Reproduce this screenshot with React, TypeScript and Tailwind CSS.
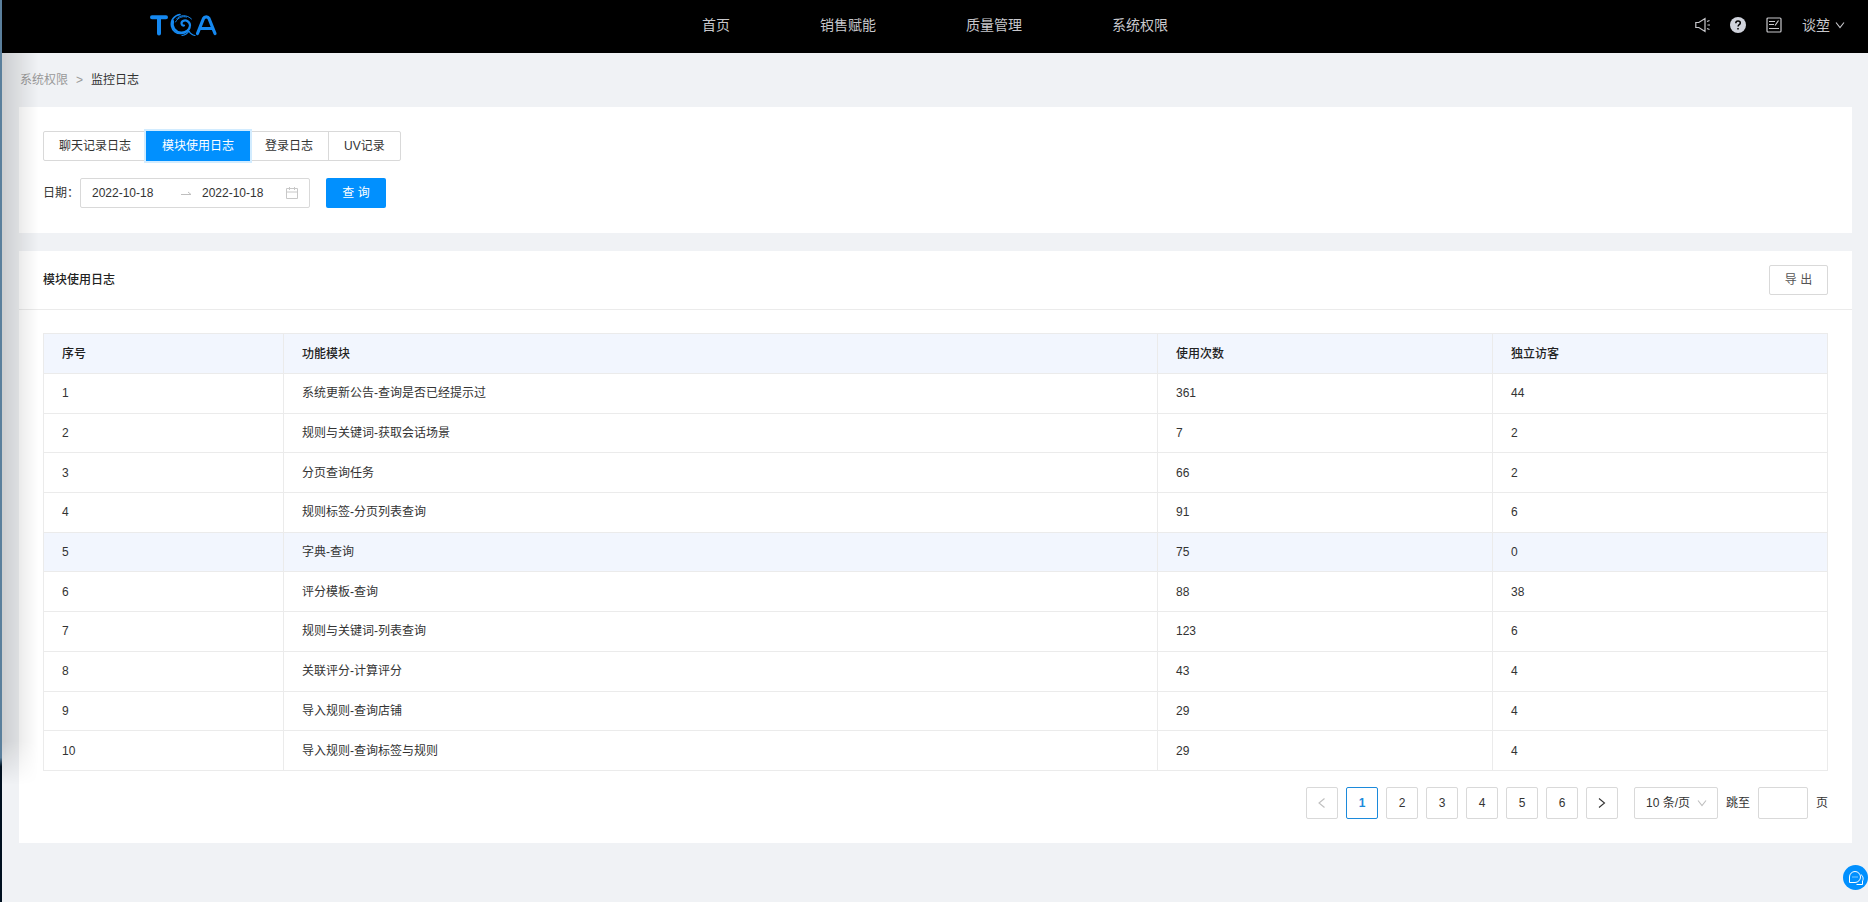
import { useState } from "react";
import clsx from "clsx";

const NAV = ["首页", "销售赋能", "质量管理", "系统权限"];

const TABS = ["聊天记录日志", "模块使用日志", "登录日志", "UV记录"];

const ROWS = [
    { name: "系统更新公告-查询是否已经提示过", count: 361, visitors: 44 },
    { name: "规则与关键词-获取会话场景", count: 7, visitors: 2 },
    { name: "分页查询任务", count: 66, visitors: 2 },
    { name: "规则标签-分页列表查询", count: 91, visitors: 6 },
    { name: "字典-查询", count: 75, visitors: 0 },
    { name: "评分模板-查询", count: 88, visitors: 38 },
    { name: "规则与关键词-列表查询", count: 123, visitors: 6 },
    { name: "关联评分-计算评分", count: 43, visitors: 4 },
    { name: "导入规则-查询店铺", count: 29, visitors: 4 },
    { name: "导入规则-查询标签与规则", count: 29, visitors: 4 },
];

function Logo() {
    return (
        <svg width="70" height="24" viewBox="0 0 70 24" fill="none" stroke="#1588f0" strokeLinecap="round" strokeLinejoin="round">
            <path d="M3 4.200h14M10 4.200v16.300" strokeWidth="4" />
            {/* Swirl */}
            <path d="M31 1.500c-6 1-9.500 6-8.500 11.500 1 5 5 8 10 7.500 4-.4 7-3 8-6" strokeWidth="1.600" />
            <path d="M24 8c-1.500 6 2 11 8 11.500 5 .3 9-3 9-7 0-4-4-6-7-4.500-2.500 1.500-1.500 5 1 4.500" strokeWidth="2.200" />
            <path d="M27.500 6C31 1.500 38 1.500 42.500 6M26.500 9c3-5 7-6 11-5" strokeWidth="1" />
            <path d="M33 22.500c3-.5 5.500-2 7-4.500 1 2 2.500 4 6 4.500" strokeWidth="1.200" />
            <path d="M48.500 20.500 54.500 5.500c1-2.200 4.500-2.200 5.500 0l6 15M52 15.500h11" strokeWidth="3.200" />
        </svg>
    );
}

function Chevron({ dir, className }: { dir: "left" | "right" | "down"; className?: string }) {
    const d = {
        left: "M8.500 1.500 3 6l5.500 4.500",
        right: "M3 1.500 8.500 6 3 10.500",
        down: "M2 3.500 6 8.500l4-5",
    }[dir];
    return (
        <svg width="12" height="12" viewBox="0 0 12 12" fill="none" stroke="currentColor" strokeWidth="1.100" className={className}>
            <path d={d} />
        </svg>
    );
}

export default function App() {
    const [tab, setTab] = useState(1);
    const [page, setPage] = useState(1);

    return (
        <div className="flex min-h-screen bg-[#f0f2f5] font-['Liberation_Sans','Noto_Sans_CJK_SC',sans-serif] text-xs text-[#333]">
            {/* Window edge */}
            <div className="w-[2px] shrink-0 bg-linear-to-b from-[#5a7f9c] from-84% to-[#001020] to-85%" />

            <div className="relative min-w-0 flex-1">
                <header className="grid h-[53px] grid-cols-[1fr_auto_1fr] items-center bg-black pb-1 text-sm text-[#c8c8cc]">
                    <div className="pl-[147px]">
                        <Logo />
                    </div>
                    <nav className="flex gap-[90px]">
                        {NAV.map((item) => (
                            <a key={item} href="#">
                                {item}
                            </a>
                        ))}
                    </nav>
                    <div className="flex items-center justify-end gap-5 pr-[22px]">
                        <button aria-label="公告">
                            <svg width="16" height="16" viewBox="0 0 16 16" fill="none" stroke="currentColor">
                                <path d="M1.800 5.500h3L11 1.500v13l-6.200-4h-3zM13 4.500l2.500-1M13.500 8H16M13 11.500l2.500 1" strokeWidth="1.200" />
                            </svg>
                        </button>
                        <button aria-label="帮助">
                            <svg width="16" height="16" viewBox="0 0 16 16">
                                <circle cx="8" cy="8" r="8" fill="#d0d3dc" />
                                <path d="M5.800 6.200c0-3 4.500-2.800 4.500-.2 0 1.800-2.200 1.600-2.200 3.500M8 11v1.500" fill="none" stroke="#000" strokeWidth="1.500" />
                            </svg>
                        </button>
                        <button aria-label="日志">
                            <svg width="16" height="16" viewBox="0 0 16 16" fill="none" stroke="currentColor">
                                <rect x="1" y="1" width="14" height="14" rx="1" strokeWidth="1.200" />
                                <path d="M3 4.500h6M3 7.500h5M3 11.500h10M9 8.500l3.500-5" strokeWidth="1.200" />
                            </svg>
                        </button>
                        <button className="flex items-center gap-1">
                            谈堃
                            <Chevron dir="down" />
                        </button>
                    </div>
                </header>

                {/* Shade cast over the left side of the page */}
                <div className="pointer-events-none absolute top-[53px] left-0 h-[732px] w-9 bg-linear-to-r from-black/15 to-transparent mask-b-from-94%" />

                <main className="pr-4 pl-[17px]">
                    <div className="flex h-[54px] items-center gap-2 pl-px text-[#999]">
                        <a href="#">系统权限</a>
                        <span>&gt;</span>
                        <span className="text-[#333]">监控日志</span>
                    </div>

                    <section className="bg-white px-6 pt-6 pb-[25px]">
                        <div className="flex">
                            {TABS.map((t, i) => (
                                <button
                                    key={t}
                                    onClick={() => setTab(i)}
                                    className={clsx(
                                        "-mr-px h-[30px] border px-[15px] first:rounded-l-xs last:rounded-r-xs",
                                        i === tab
                                            ? "relative border-[#0190fe] bg-[#0190fe] text-white shadow-[0_0_0_2px_#d2ecff]"
                                            : "border-[#d9d9d9]"
                                    )}
                                >
                                    {t}
                                </button>
                            ))}
                        </div>
                        <div className="mt-[17px] flex items-center">
                            <label htmlFor="start" className="w-[37px]">
                                日期：
                            </label>
                            <div className="flex h-[30px] w-[230px] items-center rounded-xs border border-[#d9d9d9] px-[11px]">
                                <input id="start" defaultValue="2022-10-18" className="w-[88px] outline-none" />
                                <svg width="12" height="12" viewBox="0 0 12 12" fill="none" stroke="#bfbfbf" className="mr-[10px]">
                                    <path d="M1 7.500h10L8 5" />
                                </svg>
                                <input aria-label="结束日期" defaultValue="2022-10-18" className="w-20 outline-none" />
                                <svg width="12" height="12" viewBox="0 0 12 12" fill="none" stroke="#c8c8c8" className="ml-1">
                                    <path d="M.5 1.500h11v10H.5zM.5 5h11M3.500 0v3M8.500 0v3" />
                                </svg>
                            </div>
                            <button className="ml-4 h-[30px] w-[60px] rounded-xs bg-[#0190fe] text-white">查 询</button>
                        </div>
                    </section>

                    <section className="mt-[18px] bg-white">
                        <div className="flex h-[59px] items-center justify-between border-b border-[#ebebeb] px-6">
                            <h2 className="font-medium text-[#222]">模块使用日志</h2>
                            <button className="h-[30px] w-[59px] rounded-xs border border-[#d9d9d9] text-[#555]">导 出</button>
                        </div>

                        <div className="px-6 pt-[23px] pb-6">
                            <table className="h-[438px] w-full table-fixed border-collapse text-left">
                                <thead>
                                    <tr className="h-10 bg-[#f2f6fe] text-[#222]">
                                        <th className="w-[240px] border border-[#ebebeb] px-[18px] py-2 font-medium">序号</th>
                                        <th className="border border-[#ebebeb] px-[18px] py-2 font-medium">功能模块</th>
                                        <th className="w-[335px] border border-[#ebebeb] px-[18px] py-2 font-medium">使用次数</th>
                                        <th className="w-[335px] border border-[#ebebeb] px-[18px] py-2 font-medium">独立访客</th>
                                    </tr>
                                </thead>
                                <tbody>
                                    {ROWS.map((row, i) => (
                                        <tr key={row.name} className={clsx(i === 4 && "bg-[#f2f6fe]")}>
                                            <td className="border border-[#ebebeb] px-[18px] py-2">{i + 1}</td>
                                            <td className="border border-[#ebebeb] px-[18px] py-2">{row.name}</td>
                                            <td className="border border-[#ebebeb] px-[18px] py-2">{row.count}</td>
                                            <td className="border border-[#ebebeb] px-[18px] py-2">{row.visitors}</td>
                                        </tr>
                                    ))}
                                </tbody>
                            </table>

                            <div className="mt-4 flex items-center justify-end gap-2">
                                <button disabled aria-label="上一页" className="flex size-8 items-center justify-center rounded-xs border border-[#d9d9d9] text-[#bfbfbf]">
                                    <Chevron dir="left" />
                                </button>
                                {[1, 2, 3, 4, 5, 6].map((n) => (
                                    <button
                                        key={n}
                                        onClick={() => setPage(n)}
                                        className={clsx(
                                            "size-8 rounded-xs border",
                                            n === page ? "border-[#1c8adb] font-semibold text-[#1c8adb]" : "border-[#d9d9d9]"
                                        )}
                                    >
                                        {n}
                                    </button>
                                ))}
                                <button aria-label="下一页" className="flex size-8 items-center justify-center rounded-xs border border-[#d9d9d9]">
                                    <Chevron dir="right" />
                                </button>
                                <div className="relative ml-2">
                                    <select aria-label="每页条数" className="h-8 w-[84px] appearance-none rounded-xs border border-[#d9d9d9] pl-[11px]">
                                        <option>10 条/页</option>
                                        <option>20 条/页</option>
                                    </select>
                                    <Chevron dir="down" className="pointer-events-none absolute top-[10px] right-[10px] text-[#bfbfbf]" />
                                </div>
                                <label htmlFor="jump">跳至</label>
                                <input id="jump" className="h-8 w-[50px] rounded-xs border border-[#d9d9d9] px-2" />
                                <span>页</span>
                            </div>
                        </div>
                    </section>
                </main>

                <button aria-label="在线客服" className="fixed right-0 bottom-3 flex size-[25px] items-center justify-center rounded-full bg-[#0190fe]">
                    <svg width="16" height="16" viewBox="0 0 16 16" fill="none" stroke="#fff">
                        <path d="M1.500 12.500V7a5.500 5.500 0 1 1 5.500 5.500zM13 4.500c2.500 2 2.500 5 1.500 6.500v3.500H8.500M4.500 7h1M6.500 7h1M8.500 7h1" />
                    </svg>
                </button>
            </div>
        </div>
    );
}
